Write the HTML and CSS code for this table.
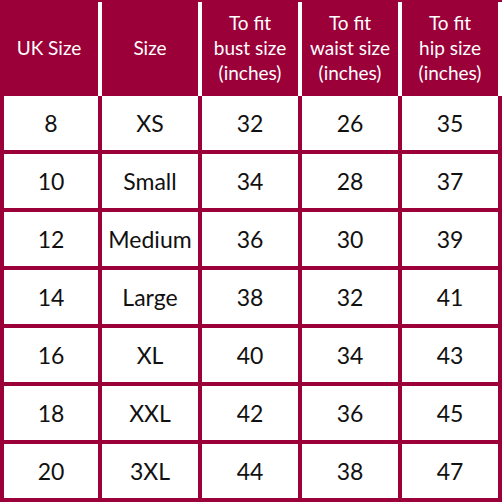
FILE: index.html
```html
<!DOCTYPE html>
<html>
<head>
<meta charset="utf-8">
<link rel="stylesheet" href="styles.css">
</head>
<body>
<div class="chart">
  <div class="head">
    <div class="hcell">UK Size</div>
    <div class="hcell">Size</div>
    <div class="hcell">To fit<br>bust size<br>(inches)</div>
    <div class="hcell">To fit<br>waist size<br>(inches)</div>
    <div class="hcell">To fit<br>hip size<br>(inches)</div>
  </div>
  <div class="body">
    <div class="cell">8</div><div class="cell">XS</div><div class="cell">32</div><div class="cell">26</div><div class="cell">35</div>
    <div class="cell">10</div><div class="cell">Small</div><div class="cell">34</div><div class="cell">28</div><div class="cell">37</div>
    <div class="cell">12</div><div class="cell">Medium</div><div class="cell">36</div><div class="cell">30</div><div class="cell">39</div>
    <div class="cell">14</div><div class="cell">Large</div><div class="cell">38</div><div class="cell">32</div><div class="cell">41</div>
    <div class="cell">16</div><div class="cell">XL</div><div class="cell">40</div><div class="cell">34</div><div class="cell">43</div>
    <div class="cell">18</div><div class="cell">XXL</div><div class="cell">42</div><div class="cell">36</div><div class="cell">45</div>
    <div class="cell">20</div><div class="cell">3XL</div><div class="cell">44</div><div class="cell">38</div><div class="cell">47</div>
  </div>
</div>
</body>
</html>
```
FILE: styles.css
```css
html, body {
  margin: 0;
  padding: 0;
  background: #ffffff;
}
.chart {
  width: 502px;
  height: 502px;
  font-family: Lato, "Open Sans", sans-serif;
}
.head {
  display: grid;
  grid-template-columns: 98px 96px 96px 96px 96px;
  column-gap: 4px;
  padding-right: 4px;
  height: 94px;
  border-top: 2px solid #9b0039;
  background: #ffffff;
}
.hcell {
  background: #9b0039;
  color: #ffffff;
  font-size: 19px;
  line-height: 25px;
  display: flex;
  align-items: center;
  justify-content: center;
  text-align: center;
  padding-bottom: 4px;
}
.body {
  display: grid;
  grid-template-columns: 94px 96px 96px 96px 96px;
  grid-auto-rows: 54px;
  gap: 4px;
  padding: 0 4px 4px 4px;
  background: #9b0039;
}
.cell {
  background: #ffffff;
  color: #111111;
  font-size: 23px;
  display: flex;
  align-items: center;
  justify-content: center;
}
```
